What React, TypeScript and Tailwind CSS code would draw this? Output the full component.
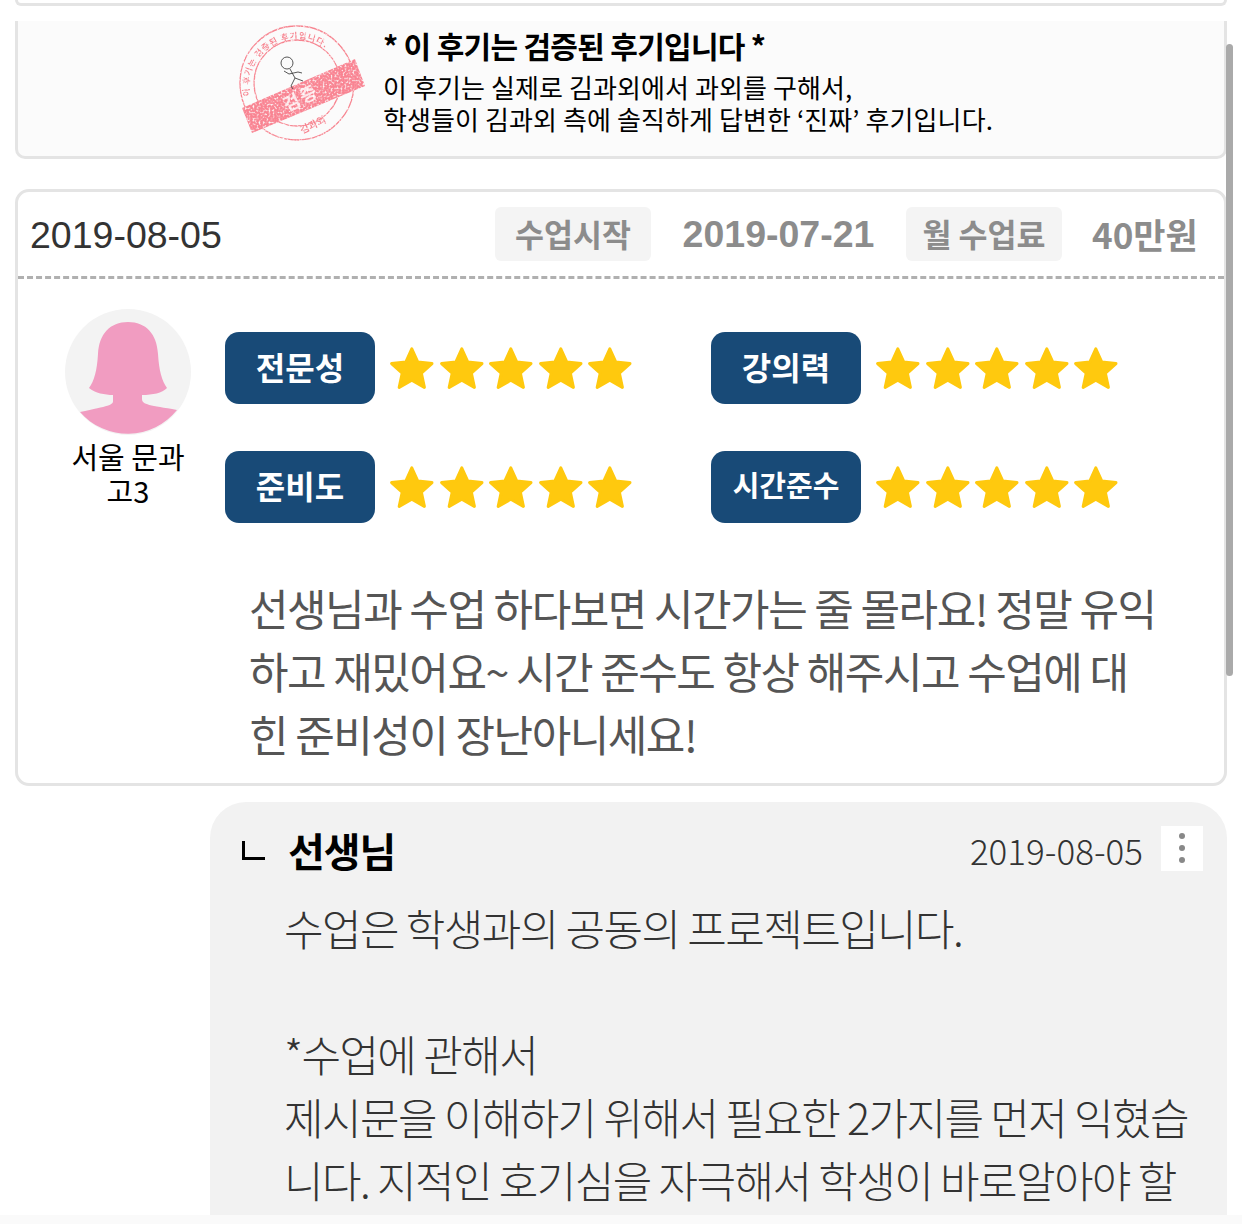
import React from 'react';

const KR = "font-['Noto_Sans_CJK_KR','Noto_Sans',sans-serif]";

const Star = () => (
  <svg viewBox="0 0 24 24" className="w-[49.6px] h-[48px] shrink-0">
    <path
      d="M12 2.400l3 6.600 7.100.8-5.300 4.800 1.500 7.100L12 18.100l-6.300 3.600 1.500-7.100-5.300-4.800 7.100-.8z"
      fill="#ffc90e"
      stroke="#ffc90e"
      strokeWidth="1.5"
      strokeLinejoin="round"
    />
  </svg>
);

const Rating = ({ label, small }: { label: string; small?: boolean }) => (
  <div className="flex items-center">
    <div
      className={`w-[150px] h-[72px] pb-[5px] rounded-[14px] bg-[#184a77] text-white font-bold flex items-center justify-center ${small ? 'text-[29px]' : 'text-[32px]'}`}
    >
      {label}
    </div>
    <div className="flex ml-[12px]">
      {[0, 1, 2, 3, 4].map((i) => (
        <Star key={i} />
      ))}
    </div>
  </div>
);

const Stamp = () => (
  <svg viewBox="0 0 130 125" className="w-[130px] h-[125px] shrink-0">
    <defs>
      <filter id="rough" x="-5%" y="-5%" width="110%" height="110%">
        <feTurbulence type="fractalNoise" baseFrequency="0.5" numOctaves="2" seed="4" result="n" />
        <feColorMatrix in="n" type="matrix" values="0 0 0 0 0  0 0 0 0 0  0 0 0 0 0  0 0 0 -3 2.400" result="m" />
        <feComposite in="SourceGraphic" in2="m" operator="in" />
      </filter>
      <path id="ring" d="M13 72 A48 48 0 1 1 108 66" />
    </defs>
    <g filter="url(#rough)">
      <circle cx="60" cy="59" r="57" fill="none" stroke="#f7838f" strokeWidth="1.300" />
      <circle cx="60" cy="59" r="43" fill="none" stroke="#f7838f" strokeWidth="1.300" />
      <text fontSize="8.500" fontWeight="700" fill="#f7838f" letterSpacing="0.8">
        <textPath href="#ring">이 후기는 검증된 후기입니다.</textPath>
      </text>
      <path d="M5 84 L118 35 L128 62 L15 109Z" fill="#f98492" />
      <text x="0" y="0" fontSize="10" fontWeight="700" fill="#f7838f" transform="translate(65 110) rotate(-26)">김과외</text>
    </g>
    <text x="0" y="0" fontSize="18" fontWeight="700" fill="#fff" opacity="0.8" transform="translate(50 88) rotate(-26)" letterSpacing="2">검증</text>
    <circle cx="50" cy="39" r="6" fill="none" stroke="#444" strokeWidth="0.900" />
    <path d="M53 45l5 9 8 3M52 50l9-2 4 1M58 54l-4 8 2 3M47 47l5 3" fill="none" stroke="#444" strokeWidth="0.900" />
  </svg>
);

const Avatar = () => (
  <svg viewBox="0 0 126 126" className="w-[126px] h-[126px]">
    <circle cx="63" cy="63" r="63" fill="#f3f3f3" />
    <path
      d="M63 13C45 13 34 25 33 45C32 62 29 72 24 79C30 84 40 86 48 86L48 92C48 96 44 97 15 103A63 63 0 0 0 112 101C85 96 77 96 77 90L77 86C88 86 97 84 102 79C97 72 94 62 93 45C92 25 81 13 63 13Z"
      fill="#f19cc1"
    />
  </svg>
);

export default function App() {
  return (
    <div className={`w-[1242px] h-[1224px] overflow-hidden bg-white relative ${KR}`}>
      <div className="absolute right-[9px] top-[44px] w-[7px] h-[632px] rounded-full bg-[#aaaaaa]" />
      <div className="absolute left-0 right-0 bottom-0 h-[9px] bg-[#fafafa] z-10" />

      <div className="h-[6px] mx-[15px] w-[1212px] border-x-[3px] border-b-[3px] border-[#e4e4e4] rounded-b-[10px]" />

      <div className="mt-[15px] ml-[15px] w-[1212px] h-[138px] bg-[#fbfbfb] border-x-[3px] border-b-[3px] border-[#e4e4e4] rounded-b-[10px] flex">
        <div className="ml-[219px] mt-[3px]">
          <Stamp />
        </div>
        <div className="ml-[16px] text-black">
          <div className="mt-[3px] text-[30px] leading-[42px] font-bold tracking-[-0.7px]">* 이 후기는 검증된 후기입니다 *</div>
          <div className="text-[26px] leading-[32px] mt-[5px] tracking-[0.1px]">이 후기는 실제로 김과외에서 과외를 구해서,</div>
          <div className="text-[26px] leading-[32px] tracking-[0.1px]">학생들이 김과외 측에 솔직하게 답변한 ‘진짜’ 후기입니다.</div>
        </div>
      </div>

      <div className="mt-[30px] ml-[15px] w-[1212px] h-[597px] border-[3px] border-[#e4e4e4] rounded-[14px]">
        <div className="h-[87px] border-b-[3px] border-dashed border-[#b0b0b0] flex items-center">
          <span className="ml-[12px] mt-[2px] text-[37.5px] text-[#333] font-['Liberation_Sans',sans-serif]">2019-08-05</span>
          <div className="ml-auto flex items-center text-[#8c8c8c] font-bold text-[31.5px]">
            <span className="w-[156px] h-[54px] rounded-[6px] bg-[#f4f4f4] flex items-center justify-center">수업시작</span>
            <span className="w-[255px] text-center font-['Liberation_Sans',sans-serif] text-[37.5px]">2019-07-21</span>
            <span className="w-[156px] h-[54px] rounded-[6px] bg-[#f4f4f4] flex items-center justify-center">월 수업료</span>
            <span className="w-[162px] pl-[30px] whitespace-nowrap text-[35px]">40만원</span>
          </div>
        </div>

        <div className="flex">
          <div className="ml-[47px] mt-[30px] w-[126px] flex flex-col items-center">
            <Avatar />
            <div className="text-[29px] leading-[34px] text-black text-center mt-[4px] whitespace-nowrap">서울 문과</div>
            <div className="text-[29px] leading-[34px] text-black text-center whitespace-nowrap">고3</div>
          </div>
          <div className="ml-[34px] mt-[53px] grid grid-cols-[486px_1fr] gap-y-[47px] h-[191px]">
            <Rating label="전문성" />
            <Rating label="강의력" />
            <Rating label="준비도" />
            <Rating label="시간준수" small />
          </div>
        </div>

        <div className="ml-[231px] mt-[53px] text-[43px] leading-[63px] tracking-[-1.5px] text-[#555] whitespace-pre">
          {'선생님과 수업 하다보면 시간가는 줄 몰라요! 정말 유익\n하고 재밌어요~ 시간 준수도 항상 해주시고 수업에 대\n힌 준비성이 장난아니세요!'}
        </div>
      </div>

      <div className="mt-[16px] ml-[210px] w-[1017px] h-[413px] bg-[#f2f2f2] rounded-t-[36px] relative font-light">
        <div className="flex items-center h-[96px]">
          <span className="ml-[32px] w-[23px] h-[19px] border-l-[3px] border-b-[3px] border-black" />
          <span className="ml-[23px] text-[40px] font-bold text-black tracking-[-1px]">선생님</span>
          <span className="ml-auto mr-[18px] text-[35px] text-[#333]">2019-08-05</span>
          <div className="mr-[24px] mt-[-4px] w-[42px] h-[45px] bg-white flex flex-col items-center justify-center gap-[6px]">
            <span className="w-[6px] h-[6px] rounded-full bg-[#888]" />
            <span className="w-[6px] h-[6px] rounded-full bg-[#888]" />
            <span className="w-[6px] h-[6px] rounded-full bg-[#888]" />
          </div>
        </div>
        <div className="ml-[74px] -mt-[2px] text-[43px] leading-[63px] tracking-[-1.6px] text-[#333] whitespace-pre">
          {'수업은 학생과의 공동의 프로젝트입니다.\n\n*수업에 관해서\n제시문을 이해하기 위해서 필요한 2가지를 먼저 익혔습\n니다. 지적인 호기심을 자극해서 학생이 바로알아야 할'}
        </div>
      </div>
    </div>
  );
}
